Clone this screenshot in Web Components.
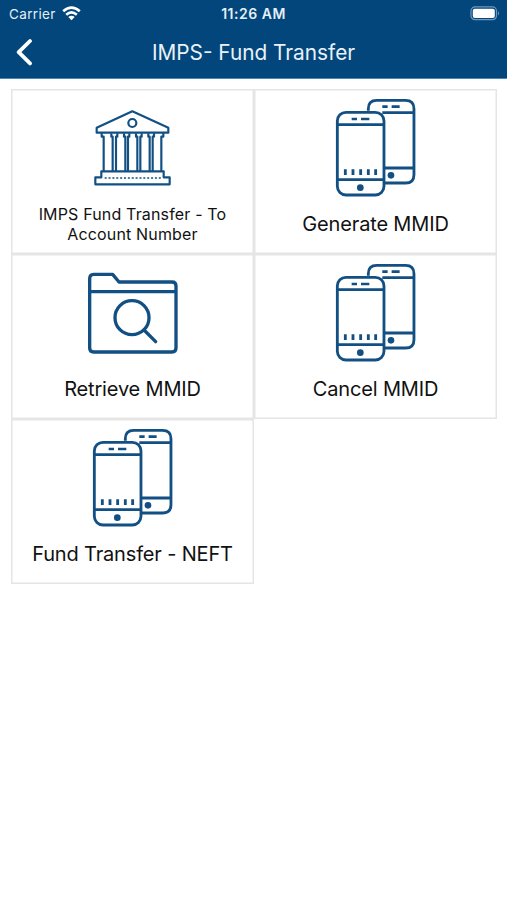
<!DOCTYPE html>
<html lang="en">
<head>
<meta charset="utf-8">
<meta name="viewport" content="width=device-width, initial-scale=1">
<title>IMPS- Fund Transfer</title>
<style>
  body {
    margin: 0;
    background: #fff;
    color: #111;
    font-family: Inter, "Liberation Sans", sans-serif;
  }
</style>
</head>
<body>

<status-bar carrier="Carrier" time="11:26 AM"></status-bar>
<nav-header>IMPS- Fund Transfer</nav-header>

<menu-grid>
  <menu-tile icon="bank" small>IMPS Fund Transfer - To<br>Account Number</menu-tile>
  <menu-tile icon="phones">Generate MMID</menu-tile>
  <menu-tile icon="folder">Retrieve MMID</menu-tile>
  <menu-tile icon="phones">Cancel MMID</menu-tile>
  <menu-tile icon="phones">Fund Transfer - NEFT</menu-tile>
</menu-grid>

<script>
const icons = {
  bank: `
    <svg width="77" height="76" viewBox="42 43 231 228" style="--stroke: 6.5">
      <path d="M50 96 157 47 265 96V111H50ZM65 113V123H71V226M244 226V123H250V113M64 227H251V245H269V266H46V245H64Z"/>
      <path d="M94 113V123H98V226M108 226V123H112V113M132 113V123H136V226M144 226V123H148V113M168 113V123H172V226M181 226V123H185V113M205 113V123H209V226M218 226V123H222V113"/>
      <circle cx="157" cy="82" r="12"/>
      <path d="M74 247H243" stroke-width="5" stroke-dasharray="6 5.6"/>
    </svg>`,
  phones: `
    <svg width="81.3" height="99.3" viewBox="30 24 244 298">
      <path d="M130 62V56Q130 31 155 31H242Q267 31 267 56V254Q267 279 242 279H180M172 68H266M180 234H266"/>
      <path d="M172 50H188M200 50H224M80 87H96M108 87H133" stroke-width="8"/>
      <rect x="37" y="67" width="140" height="248" rx="26"/>
      <path d="M38 104H176M38 269H176"/>
      <path class="bars" d="M61 238V255M84 238V255M107 238V255M130 238V255M152 238V255"/>
      <circle class="dot" cx="106" cy="293" r="10"/>
      <circle class="dot" cx="198" cy="256" r="10"/>
    </svg>`,
  folder: `
    <svg width="90" height="82" viewBox="37 34 270 246" style="--stroke: 10">
      <path d="M42 54Q42 41 54 41H111L130 64H289Q301 64 301 76V262Q301 274 289 274H54Q42 274 42 262ZM42 93H301"/>
      <circle cx="169" cy="171" r="51"/>
      <path d="M205 208 240 243" stroke-linecap="round"/>
    </svg>`
};

class StatusBar extends HTMLElement {
  constructor() {
    super();
    this.attachShadow({ mode: 'open' });
  }

  connectedCallback() {
    this.shadowRoot.innerHTML = `
      <style>
        :host {
          display: grid;
          grid-template-columns: 1fr auto 1fr;
          align-items: center;
          box-sizing: border-box;
          height: 27px;
          padding: 0 7px 0 9px;
          background: #02467b;
          color: #e5eff7;
          font-size: 13.5px;
        }

        .left {
          display: flex;
          align-items: center;
          gap: 6px;
          letter-spacing: 0.35px;
        }

        .time {
          margin-right: 2px;
          font-size: 14px;
          font-weight: 600;
          letter-spacing: 0.5px;
        }

        .battery {
          justify-self: end;
        }

        svg {
          display: block;
        }
      </style>

      <div class="left">
        <span>${this.getAttribute('carrier')}</span>
        <svg width="19" height="15" viewBox="0 0 19 15" fill="none" stroke="#fff" stroke-width="2.6">
          <path d="M1.2 5.3Q9.5 -2.2 17.8 5.3M4.2 8.7Q9.5 4 14.8 8.7"/>
          <path d="M6.3 11Q9.5 8.4 12.7 11L9.5 14.2Z" fill="#fff" stroke="none"/>
        </svg>
      </div>
      <span class="time">${this.getAttribute('time')}</span>
      <svg class="battery" width="30" height="15" viewBox="0 0 30 15">
        <rect x="1" y="0.9" width="25.5" height="12.8" rx="4" fill="none" stroke="#7199bc" stroke-width="1.2"/>
        <rect x="2.8" y="2.7" width="22" height="9.2" rx="2" fill="#fff"/>
        <path d="M28 5Q30 7.3 28 9.6Z" fill="#7199bc"/>
      </svg>
    `;
  }
}

class NavHeader extends HTMLElement {
  constructor() {
    super();
    this.attachShadow({ mode: 'open' });
  }

  connectedCallback() {
    this.shadowRoot.innerHTML = `
      <style>
        :host {
          display: grid;
          grid-template-columns: 40px 1fr 40px;
          align-items: center;
          box-sizing: border-box;
          height: 52px;
          border-bottom: 1px solid #4b87b6;
          background: #02467b;
          color: #e9f2f9;
        }

        svg {
          display: block;
          margin: 0 0 2px 15px;
        }

        .title {
          text-align: center;
          font-size: 20.8px;
          line-height: 50px;
        }
      </style>

      <svg width="18" height="28" viewBox="0 0 18 28" fill="none" stroke="#fff" stroke-width="3.8" stroke-linecap="round" stroke-linejoin="round">
        <path d="M15 3 3.7 14.2 15 25.4"/>
      </svg>
      <div class="title"><slot></slot></div>
    `;
  }
}

class MenuGrid extends HTMLElement {
  constructor() {
    super();
    this.attachShadow({ mode: 'open' });
  }

  connectedCallback() {
    this.shadowRoot.innerHTML = `
      <style>
        :host {
          display: grid;
          grid-template-columns: 1fr 1fr;
          grid-auto-rows: 165px;
          padding: 10px 10px 0 11px;
        }
      </style>
      <slot></slot>
    `;
  }
}

class MenuTile extends HTMLElement {
  constructor() {
    super();
    this.attachShadow({ mode: 'open' });
  }

  connectedCallback() {
    this.shadowRoot.innerHTML = `
      <style>
        :host {
          display: grid;
          grid-template-rows: 99px 54px;
          justify-items: center;
          align-items: center;
          box-sizing: border-box;
          padding-top: 9px;
          box-shadow: inset 0 0 0 1.5px #e5e5e5;
        }

        svg {
          display: block;
          fill: none;
          stroke: #124f83;
          stroke-width: var(--stroke, 8.5);
          stroke-linejoin: round;
        }

        .dot {
          fill: #124f83;
          stroke: none;
        }

        .label {
          text-align: center;
          font-size: 20px;
          line-height: 24px;
          letter-spacing: -0.16px;
        }

        :host([small]) .label {
          font-size: 16px;
          line-height: 20px;
          letter-spacing: 0.16px;
        }
      </style>

      ${icons[this.getAttribute('icon')]}
      <div class="label"><slot></slot></div>
    `;
  }
}

customElements.define('status-bar', StatusBar);
customElements.define('nav-header', NavHeader);
customElements.define('menu-grid', MenuGrid);
customElements.define('menu-tile', MenuTile);
</script>
</body>
</html>
